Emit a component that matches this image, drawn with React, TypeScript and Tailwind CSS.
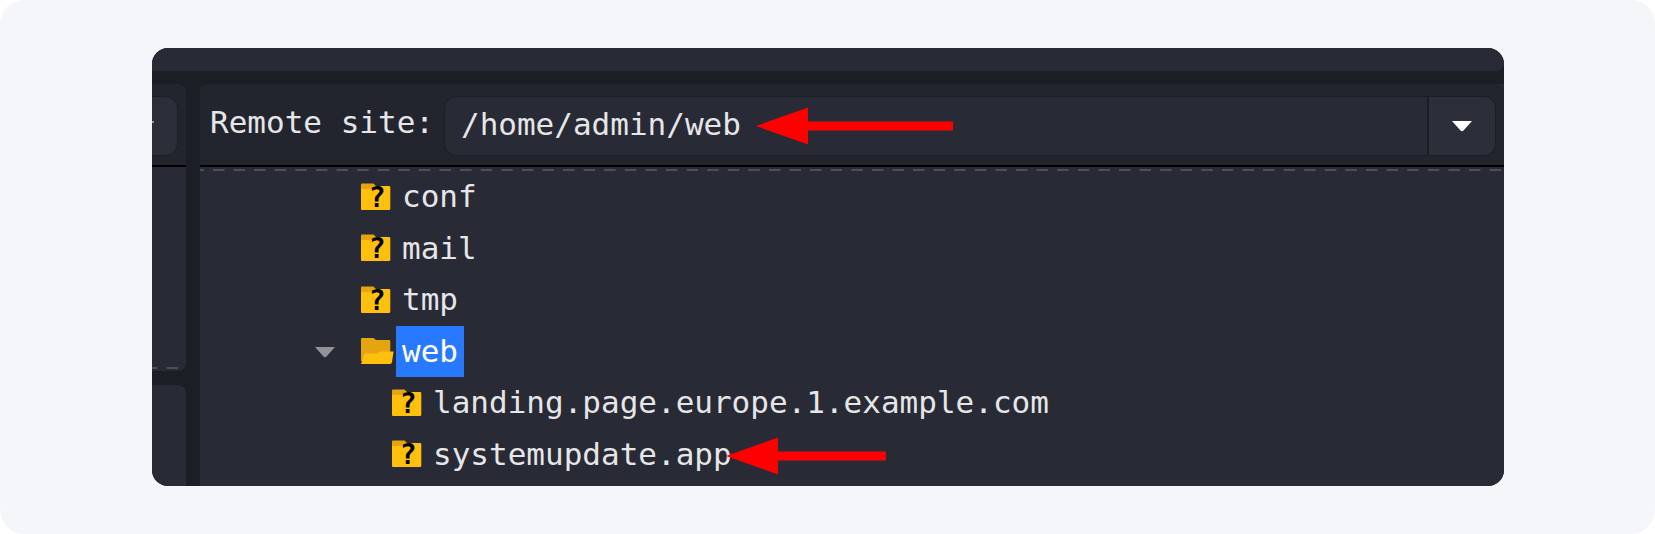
import { useState } from "react";
import clsx from "clsx";

type Entry = {
	name: string;
	depth: number;
	open?: boolean;
	marked?: boolean;
};

const entries: Entry[] = [
	{ name: "conf", depth: 0 },
	{ name: "mail", depth: 0 },
	{ name: "tmp", depth: 0 },
	{ name: "web", depth: 0, open: true },
	{ name: "landing.page.europe.1.example.com", depth: 1 },
	{ name: "systemupdate.app", depth: 1, marked: true },
];

function UnknownFolder() {
	return (
		<svg className="h-7 w-8 shrink-0 overflow-visible" viewBox="0 0 32 28" aria-hidden="true">
			<path d="M0 1.5Q0 .5 1 .5H12.5L15 3H28V9H0Z" fill="#e5a50f" />
			<path d="M0 6H12L15 3H28Q29.3 3 29.3 4V25.5Q29.3 27 28 27H1Q0 27 0 26Z" fill="#ffc00d" />
			<text
				x="16.3"
				y="24"
				textAnchor="middle"
				className="fill-black font-['DejaVu_Sans_Mono',monospace] text-[28px] font-bold"
			>
				?
			</text>
		</svg>
	);
}

function OpenFolder() {
	return (
		<svg className="h-7 w-[33px] shrink-0" viewBox="0 0 33 28" aria-hidden="true">
			<path d="M0 2Q0 1 1 1H12.5L15 3H28Q29.3 3 29.3 4V24H0Z" fill="#e5a50f" />
			<path d="M0 27L3.5 16.5H16L19 14.5H32.6L31 25Q30.6 27 29 27Z" fill="#ffc00d" />
		</svg>
	);
}

function Caret({ className }: { className: string }) {
	return (
		<svg className={className} viewBox="0 0 20 11" aria-hidden="true">
			<path d="M0 0H20L11.5 9.5Q10 11 8.5 9.5Z" fill="currentColor" />
		</svg>
	);
}

function Dashes({ offset }: { offset: number }) {
	return (
		<svg className="block h-0.5 w-full" aria-hidden="true">
			<line
				x1="0"
				y1="1"
				x2="100%"
				y2="1"
				stroke="#4d4f58"
				strokeWidth="2"
				strokeDasharray="11.5 9.09"
				strokeDashoffset={offset}
			/>
		</svg>
	);
}

function Arrow({ long, className }: { long?: boolean; className: string }) {
	const end = long ? 197 : 160;
	return (
		<svg
			className={clsx("pointer-events-none absolute h-[38px]", className)}
			viewBox={`0 0 ${end} 38`}
			aria-hidden="true"
		>
			<path d={`M0 19L52 .5V14.5H${end}V23.5H52V37.5Z`} fill="#f00" />
		</svg>
	);
}

function TreeRow({ entry }: { entry: Entry }) {
	return (
		<li
			role="treeitem"
			aria-selected={!!entry.open}
			className={clsx("flex items-stretch", entry.depth ? "pl-[146px]" : "pl-[115px]")}
		>
			<span className="flex w-[46px] shrink-0 items-center pt-0.5">
				{entry.open && (
					<button type="button" aria-label="Collapse web" className="text-[#929399]">
						<Caret className="h-[11px] w-5" />
					</button>
				)}
			</span>
			<span className="flex w-[35px] shrink-0 items-center">
				{entry.open ? <OpenFolder /> : <UnknownFolder />}
			</span>
			<span
				className={clsx(
					"relative flex items-center px-1.5",
					entry.open && "bg-[#2979ff] text-white",
				)}
			>
				{entry.name}
				{entry.marked && <Arrow className="top-2 left-full -ml-3 w-[160px]" />}
			</span>
		</li>
	);
}

export default function App() {
	const [path, setPath] = useState("/home/admin/web");

	return (
		<main className="rounded-3xl bg-[#f4f6fa] py-12 pr-[151px] pl-[152px]">
			<div className="overflow-hidden rounded-2xl bg-[#1c1e26] font-['DejaVu_Sans_Mono',monospace] text-[31px] leading-none text-[#e6e6e8]">
				<div className="h-[23px] rounded-br-lg bg-[#282a35]" />
				<div className="mt-[13px] flex gap-3.5">
					<aside className="flex w-[34px] shrink-0 flex-col">
						<div className="h-[81px] rounded-tr-lg bg-[#23252e] py-3 pr-2">
							<div className="flex h-[60px] items-center rounded-r-xl border border-l-0 border-[#1c1e26] bg-[#2c2e39]">
								<span className="mb-2 h-0.5 w-0.5 bg-[#92939a]" />
							</div>
						</div>
						<div className="flex grow flex-col justify-end rounded-br-lg border-t-2 border-black bg-[#282a35] pb-0.5">
							<Dashes offset={6} />
						</div>
						<div className="mt-3.5 h-[101px] rounded-tr-lg bg-[#282a35]" />
					</aside>

					<section className="min-w-0 grow rounded-tl-lg bg-[#282a35]">
						<div className="flex items-center rounded-t-lg border-b-2 border-black bg-[#23252e] pt-3 pr-2 pb-[9px] pl-2.5">
							<label htmlFor="remote-site" className="shrink-0 pr-2.5 pb-2 whitespace-nowrap">
								Remote site:
							</label>
							<div className="relative flex h-[60px] min-w-0 grow rounded-xl border border-[#1c1e26] bg-[#282a35]">
								<input
									id="remote-site"
									type="text"
									value={path}
									onChange={(e) => setPath(e.target.value)}
									className="min-w-0 grow bg-transparent pb-1 pl-4 outline-none"
								/>
								<button
									type="button"
									aria-label="Recent paths"
									className="flex w-[68px] shrink-0 items-center justify-center rounded-r-xl border-l-2 border-[#1c1e26] bg-[#2c2e39] text-white"
								>
									<Caret className="h-[11px] w-5" />
								</button>
								<Arrow long className="top-2.5 left-[311px] w-[197px]" />
							</div>
						</div>
						<div className="pt-0.5">
							<Dashes offset={7.6} />
						</div>
						<ul role="tree" aria-label="Remote folders" className="mb-1.5 grid h-[309px] grid-rows-6">
							{entries.map((entry) => (
								<TreeRow key={entry.name} entry={entry} />
							))}
						</ul>
					</section>
				</div>
			</div>
		</main>
	);
}
